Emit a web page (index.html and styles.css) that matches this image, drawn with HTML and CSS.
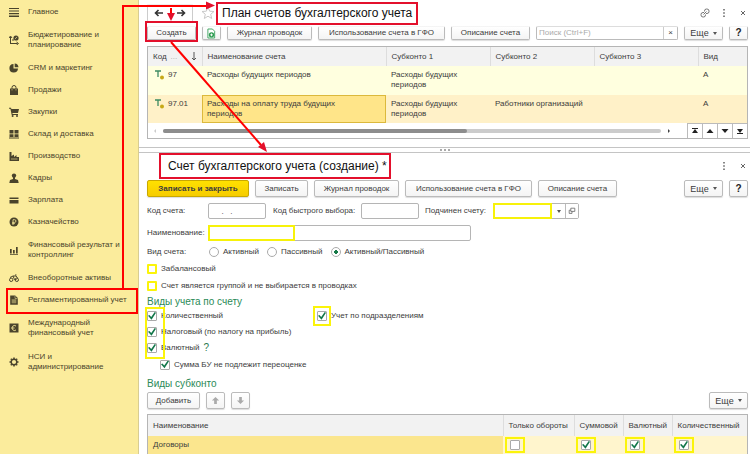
FILE: index.html
```html
<!DOCTYPE html>
<html lang="ru">
<head>
<meta charset="utf-8">
<title>План счетов бухгалтерского учета</title>
<link rel="stylesheet" href="styles.css">
</head>
<body>
<nav class="sidebar">
  <a class="item" href="#"><svg class="icon" viewBox="0 0 10 10"><path d="M0 1h10v1H0zM0 3.4h10v1.2H0zM0 6h10v1.200H0zM0 8.600h10V10H0z"/></svg><span>Главное</span></a>
  <a class="item item-tall" href="#"><svg class="icon" viewBox="0 0 10 10"><path d="M1.500 9V2M0 3l1.500-2L3 3M1.500 8.500h7M7.500 7l2 1.500-2 1.500M4 6V4" fill="none" stroke="#4a442c"/><circle cx="7" cy="3" r="2.600"/><path d="M6 4.200l2-2.400" stroke="#fbec9c" stroke-width=".7"/></svg><span>Бюджетирование и<br>планирование</span></a>
  <a class="item" href="#"><svg class="icon" viewBox="0 0 10 10"><path d="M4.500 1v4.500H9A4.300 4.300 0 1 1 4.500 1z"/><path d="M5.700 .5A4.200 4.200 0 0 1 9.500 4.300H5.700z"/></svg><span>CRM и маркетинг</span></a>
  <a class="item" href="#"><svg class="icon" viewBox="0 0 10 10"><path d="M1 3.500h8V10H1z"/><path d="M3 5V2.500a2 2 0 0 1 4 0V5" fill="none" stroke="#4a442c"/><path d="M3 4v1.500M7 4v1.500" stroke="#fbec9c" stroke-width=".5"/></svg><span>Продажи</span></a>
  <a class="item" href="#"><svg class="icon" viewBox="0 0 10 10"><path d="M0 .7h2l.4 1.200H10L9 6H3.400l.2 1H9v1H2.700L1.400 1.700H0z"/><circle cx="3.600" cy="9" r="1"/><circle cx="8" cy="9" r="1"/></svg><span>Закупки</span></a>
  <a class="item" href="#"><svg class="icon" viewBox="0 0 10 10"><path d="M.5 1h4v3.500h-4zM5.500 1h4v3.500h-4zM.5 5.300h4v2.700h-4zM5.500 5.300h4v2.700h-4zM0 8.500h10v1H0z"/></svg><span>Склад и доставка</span></a>
  <a class="item" href="#"><svg class="icon" viewBox="0 0 10 10"><path d="M.5 10V1h2v4L5 3.500V6l2.500-2v2H10v4z"/><path d="M2 8h6.500" stroke="#fbec9c" stroke-width=".6"/></svg><span>Производство</span></a>
  <a class="item" href="#"><svg class="icon" viewBox="0 0 10 10"><circle cx="5" cy="2.600" r="2.200"/><path d="M4 4h2v2l3 1 .7 3H.3L1 7l3-1z"/></svg><span>Кадры</span></a>
  <a class="item" href="#"><svg class="icon" viewBox="0 0 10 10"><path d="M.5 2.500h9V4h-9zM.5 5h9v3.500h-9z"/></svg><span>Зарплата</span></a>
  <a class="item" href="#"><svg class="icon" viewBox="0 0 10 10"><circle cx="5" cy="5" r="4.500"/><path d="M4 8V2.700h1.600a1.300 1.300 0 0 1 0 2.700H3.200M3.200 6.600h2.700" fill="none" stroke="#fbec9c" stroke-width=".8"/></svg><span>Казначейство</span></a>
  <a class="item item-tall" href="#"><svg class="icon" viewBox="0 0 10 10"><path d="M1 4h1.700v4.500H1zM4 5h1.700v3.500H4zM7 2h1.700v6.500H7zM1 9h8v.8H1z"/></svg><span>Финансовый результат и<br>контроллинг</span></a>
  <a class="item" href="#"><svg class="icon" viewBox="0 0 10 10"><g fill="none" stroke="#4a442c"><circle cx="2.200" cy="6.800" r="1.700"/><circle cx="7.800" cy="6.800" r="1.700"/><path d="M1 4.500l3-1.500h3l1.500 2M4 3l1.500 3.500h2M6 2h1.500"/></g></svg><span>Внеоборотные активы</span></a>
  <a class="item" href="#"><svg class="icon" viewBox="0 0 10 10"><path d="M1.200.5h5L8.800 3v6.800H1.200z"/><path d="M2.500 5h5M2.500 7h5M4 4.500v4M6 4.500v4M6 1v2.500h2.500" stroke="#fbec9c" stroke-width=".5" fill="none"/></svg><span>Регламентированный учет</span></a>
  <a class="item item-tall" href="#"><svg class="icon" viewBox="0 0 10 10"><path d="M.5.5h9v9h-9z"/><path d="M7 3a2.500 2.500 0 1 0 0 4M2.500 5h3" stroke="#fbec9c" stroke-width=".9" fill="none"/></svg><span>Международный<br>финансовый учет</span></a>
  <a class="item item-tall" href="#"><svg class="icon" viewBox="0 0 10 10"><circle cx="5" cy="5" r="2.800" fill="none" stroke="#4a442c" stroke-width="1.400"/><path d="M5 .5v1.500M5 8v1.500M.5 5H2M8 5h1.500M1.800 1.800l1 1M7.200 7.200l1 1M8.200 1.800l-1 1M2.800 7.200l-1 1" stroke="#4a442c" stroke-width="1.500"/></svg><span>НСИ и<br>администрирование</span></a>
</nav>

<main class="main">
  <section class="list-pane">
    <header class="pane-head">
      <div class="history">
        <button type="button" aria-label="Назад"><svg viewBox="0 0 10 8"><path d="M9 4H2M4.500 1L1.500 4l3 3" fill="none" stroke="#333" stroke-width="1.600"/></svg></button>
        <button type="button" aria-label="Вперед"><svg viewBox="0 0 10 8"><path d="M1 4h7M5.500 1l3 3-3 3" fill="none" stroke="#333" stroke-width="1.600"/></svg></button>
      </div>
      <svg class="star" viewBox="0 0 14 14"><path d="M7 1l1.700 4.200 4.300.3-3.300 2.800 1 4.200L7 10.200l-3.700 2.300 1-4.200L1 5.500l4.300-.3z" fill="none" stroke="#c9c9c9"/></svg>
      <h1 class="title">План счетов бухгалтерского учета</h1>
      <div class="window-tools">
        <svg class="tool" viewBox="0 0 10 10"><g fill="none" stroke="#777"><path d="M4.500 3.500V3a2 2 0 0 1 2-2H7a2 2 0 0 1 2 2v.500a2 2 0 0 1-2 2H6"/><path d="M4 4.500H3a2 2 0 0 0-2 2V7a2 2 0 0 0 2 2h.500a2 2 0 0 0 2-2v-.500M3.500 6.500l3-3"/></g></svg>
        <svg class="tool" viewBox="0 0 10 10"><path d="M4.300 1h1.400v1.400H4.300zM4.300 4.300h1.400v1.400H4.300zM4.300 7.600h1.400V9H4.300z" fill="#555"/></svg>
        <svg class="tool" viewBox="0 0 10 10"><path d="M3 3l4 4M7 3L3 7" stroke="#666"/></svg>
      </div>
    </header>
    <div class="toolbar toolbar-cut">
      <button class="btn btn-create" type="button">Создать</button>
      <button class="btn btn-copy" type="button" aria-label="Скопировать"><svg viewBox="0 0 10 12"><path d="M1 1h5l2.500 2.500V11H1z" fill="#fff" stroke="#37a05a"/><circle cx="5" cy="7.500" r="3" fill="#2f9c52"/><path d="M5 6v3M3.500 7.500h3" stroke="#fff"/></svg></button>
      <button class="btn btn-journal" type="button">Журнал проводок</button>
      <button class="btn btn-usage" type="button">Использование счета в ГФО</button>
      <button class="btn btn-about" type="button">Описание счета</button>
      <div class="search">
        <input type="search" placeholder="Поиск (Ctrl+F)" aria-label="Поиск">
        <button type="button" aria-label="Очистить">×</button>
      </div>
      <button class="btn btn-more push" type="button">Еще <i class="caret"></i></button>
      <button class="btn btn-help" type="button">?</button>
    </div>
    <div class="grid-box">
      <table class="accounts">
        <colgroup><col class="c-code"><col><col class="c-sub"><col class="c-sub"><col class="c-sub"><col class="c-kind"></colgroup>
        <thead><tr><th><span class="code-head">Код <span class="dots">...</span><svg viewBox="0 0 6 9"><path d="M3 0v8M1 6l2 2 2-2" fill="none" stroke="#555"/></svg></span></th><th>Наименование счета</th><th>Субконто 1</th><th>Субконто 2</th><th>Субконто 3</th><th>Вид</th></tr></thead>
        <tbody>
          <tr><td><span class="code"><svg viewBox="0 0 10 10"><path d="M0 1h6M3 1v6" stroke="#3d8a62" stroke-width="1.300"/><circle cx="7" cy="7.500" r="2" fill="#c6a917"/></svg>97</span></td><td>Расходы будущих периодов</td><td>Расходы будущих<br>периодов</td><td></td><td></td><td>А</td></tr>
          <tr class="current"><td><span class="code"><svg viewBox="0 0 10 10"><path d="M0 1h6M3 1v6" stroke="#3d8a62" stroke-width="1.300"/><circle cx="7" cy="7.500" r="2" fill="#c6a917"/></svg>97.01</span></td><td class="focus">Расходы на оплату труда будущих<br>периодов</td><td>Расходы будущих<br>периодов</td><td>Работники организаций</td><td></td><td>А</td></tr>
        </tbody>
      </table>
      <div class="scroll-row">
        <i class="arrow arrow-left"></i>
        <div class="track"><div class="thumb"></div></div>
        <i class="arrow arrow-right"></i>
        <div class="pager">
          <button type="button" aria-label="В начало"><svg viewBox="0 0 8 6"><path d="M1 0h6v1H1zM4 1l3 4H1z"/></svg></button>
          <button type="button" aria-label="Вверх"><svg viewBox="0 0 8 6"><path d="M4 1l3.500 4h-7z"/></svg></button>
          <button type="button" aria-label="Вниз"><svg viewBox="0 0 8 6"><path d="M4 5l3.500-4h-7z"/></svg></button>
          <button type="button" aria-label="В конец"><svg viewBox="0 0 8 6"><path d="M1 5h6v1H1zM4 5l3-4H1z"/></svg></button>
        </div>
      </div>
    </div>
  </section>

  <div class="splitter"><i></i><i></i><i></i></div>

  <section class="form-pane">
    <header class="pane-head form-head">
      <h2 class="title">Счет бухгалтерского учета (создание) *</h2>
      <div class="window-tools">
        <svg class="tool" viewBox="0 0 10 10"><path d="M4.300 1h1.400v1.400H4.300zM4.300 4.300h1.400v1.400H4.300zM4.300 7.600h1.400V9H4.300z" fill="#555"/></svg>
        <svg class="tool" viewBox="0 0 10 10"><path d="M3 3l4 4M7 3L3 7" stroke="#666"/></svg>
      </div>
    </header>
    <div class="toolbar form-toolbar">
      <button class="btn btn-primary" type="button">Записать и закрыть</button>
      <button class="btn btn-save" type="button">Записать</button>
      <button class="btn btn-journal" type="button">Журнал проводок</button>
      <button class="btn btn-usage" type="button">Использование счета в ГФО</button>
      <button class="btn btn-about" type="button">Описание счета</button>
      <button class="btn btn-more push" type="button">Еще <i class="caret"></i></button>
      <button class="btn btn-help" type="button">?</button>
    </div>
    <div class="field-row">
      <label class="lead" for="code">Код счета:</label>
      <input class="field" id="code" type="text" value="  .   .">
      <label class="quick" for="quick">Код быстрого выбора:</label>
      <input class="field" id="quick" type="text">
      <label class="parent-label" for="parent">Подчинен счету:</label>
      <span class="combo"><input class="marked" id="parent" type="text"><button type="button" aria-label="Выбрать"><i class="caret"></i></button><button type="button" aria-label="Открыть"><svg viewBox="0 0 10 10"><path d="M3.500 1.500h5v4h-5zM5 5.500v2.500H1.500V4h2" fill="none" stroke="#666"/></svg></button></span>
    </div>
    <div class="field-row">
      <label class="lead" for="name">Наименование:</label>
      <span class="name-field"><input id="name" type="text"></span>
    </div>
    <div class="field-row radio-row">
      <span class="lead">Вид счета:</span>
      <label><input type="radio" name="kind">Активный</label>
      <label><input type="radio" name="kind">Пассивный</label>
      <label><input type="radio" name="kind" checked>Активный/Пассивный</label>
    </div>
    <label class="check plain"><input class="bright" type="checkbox">Забалансовый</label>
    <label class="check plain"><input class="bright" type="checkbox">Счет является группой и не выбирается в проводках</label>
    <h3>Виды учета по счету</h3>
    <div class="kinds">
      <div class="kinds-left">
        <label class="check"><input type="checkbox" checked>Количественный</label>
        <label class="check"><input type="checkbox" checked>Налоговый (по налогу на прибыль)</label>
        <div class="check"><label class="check"><input type="checkbox" checked>Валютный</label><a class="hint" href="#">?</a></div>
      </div>
      <label class="check"><span class="mark"><input type="checkbox" checked></span>Учет по подразделениям</label>
    </div>
    <label class="check nested"><input type="checkbox" checked>Сумма БУ не подлежит переоценке</label>
    <h3 class="second">Виды субконто</h3>
    <div class="toolbar">
      <button class="btn btn-add" type="button">Добавить</button>
      <button class="btn btn-move" type="button" aria-label="Выше"><svg viewBox="0 0 10 10"><path d="M5 1l4 4H6.500v4h-3V5H1z" fill="#aaa"/></svg></button>
      <button class="btn btn-move" type="button" aria-label="Ниже"><svg viewBox="0 0 10 10"><path d="M5 9l4-4H6.500V1h-3v4H1z" fill="#aaa"/></svg></button>
      <button class="btn btn-more push" type="button">Еще <i class="caret"></i></button>
    </div>
    <div class="grid-box subconto-box">
      <table class="subconto">
        <colgroup><col><col class="c-turn"><col class="c-flag"><col class="c-flag"><col class="c-qty"></colgroup>
        <thead><tr><th>Наименование</th><th>Только обороты</th><th>Суммовой</th><th>Валютный</th><th>Количественный</th></tr></thead>
        <tbody><tr><td>Договоры</td>
          <td><span class="mark"><input type="checkbox" aria-label="Только обороты"></span></td>
          <td><span class="mark"><input type="checkbox" aria-label="Суммовой" checked></span></td>
          <td><span class="mark"><input type="checkbox" aria-label="Валютный" checked></span></td>
          <td><span class="mark"><input type="checkbox" aria-label="Количественный" checked></span></td></tr></tbody>
      </table>
    </div>
  </section>
</main>

<svg class="callouts" width="750" height="454" viewBox="0 0 750 454" aria-hidden="true">
  <g fill="none" stroke="#f00" stroke-width="2">
    <rect x="7" y="289" width="130" height="24"/>
    <path d="M123 289V6H207"/>
    <path d="M171 8v6"/>
    <path d="M171 42L261 145"/>
  </g>
  <rect x="146" y="22" width="51" height="19" fill="none" stroke="#e3102c" stroke-width="2"/>
  <path d="M215 5.500l-9-4v8zM171 21l-4-8h8zM267 152l-9-5 6-5z" fill="#e3102c"/>
</svg>
</body>
</html>
```
FILE: styles.css
```css
* { box-sizing: border-box; }

body {
  position: relative;
  display: flex;
  min-height: 100vh;
  max-height: 100vh;
  margin: 0;
  overflow: hidden;
  background: #fff;
  color: #3c3c3c;
  font: 8px/10px "Liberation Sans", Arial, sans-serif;
}

button, input { margin: 0; padding: 0; font: inherit; color: inherit; }
button { display: flex; align-items: center; justify-content: center; }
h1, h2, h3 { margin: 0; font-weight: 400; }

/* Sections panel */
.sidebar {
  flex: none;
  width: 139px;
  padding-top: 1px;
  background: #fbec9c;
  border-right: 1px solid #d8cd92;
}
.item {
  display: flex;
  align-items: center;
  gap: 9px;
  height: 22px;
  padding-left: 9px;
  color: #4a442c;
  text-decoration: none;
  white-space: nowrap;
}
.item-tall { height: 34px; }
.icon { flex: none; width: 10px; height: 10px; fill: #4a442c; }

.main { flex: 1; min-width: 0; }
.list-pane, .form-pane { padding: 0 2px 0 8px; }

.pane-head { display: flex; align-items: center; height: 26px; }
.title {
  padding: 0 4px;
  border: 2px solid #e3102c;
  color: #111;
  font-size: 12px;
  line-height: 19px;
  white-space: nowrap;
}
.form-head { padding-left: 12px; }
.form-head .title { padding: 0 2px 0 7px; line-height: 22px; }
.history {
  display: flex;
  width: 46px;
  height: 18px;
  border: 1px solid #ccc;
  border-top-color: #eee;
  border-radius: 2px;
}
.history button { flex: 1; border: 0; background: none; }
.history svg { width: 10px; height: 8px; }
.star { width: 14px; height: 14px; margin: 0 1px 0 8px; }
.window-tools { display: flex; gap: 9px; margin-left: auto; }
.tool { width: 10px; height: 10px; }

/* Command bars */
.toolbar { display: flex; gap: 6px; height: 17px; }
.btn {
  flex: none;
  border: 1px solid #bbb;
  border-radius: 2px;
  background: linear-gradient(#fff, #f4f4f4);
  box-shadow: 0 1px 1px #ddd;
  white-space: nowrap;
}
.toolbar-cut { height: 14px; }
.toolbar-cut .btn { border-top-color: transparent; }
.btn-create { width: 49px; }
.btn-copy { width: 19px; }
.btn-copy svg { width: 9px; height: 11px; }
.btn-journal { width: 85px; }
.btn-usage { width: 127px; }
.btn-about { width: 79px; }
.btn-save { width: 53px; }
.btn-add { width: 53px; }
.btn-move { width: 19px; }
.btn-move svg { width: 9px; height: 9px; }
.btn-more { width: 39px; gap: 4px; font-size: 9px; }
.btn-help { width: 19px; color: #222; font-size: 10px; font-weight: 700; }
.btn-primary {
  width: 102px;
  border-color: #c9a800;
  background: linear-gradient(#ffe100, #f6cc00);
  font-weight: 700;
}
.push { margin-left: auto; }
.caret {
  width: 0;
  border: 2px solid transparent;
  border-top: 3px solid #555;
  border-bottom: 0;
}
.search {
  display: flex;
  width: 143px;
  border: 1px solid #bbb;
  border-top-color: #ddd;
  border-radius: 2px;
}
.search input { flex: 1; min-width: 0; padding-left: 2px; border: 0; background: none; }
.search input::placeholder { color: #aaa; }
.search button { width: 14px; border: 0; border-left: 1px solid #ccc; background: none; }

/* Tables */
.grid-box { margin-top: 6px; border: 1px solid #b5b5b5; }
table { width: 100%; border-collapse: collapse; table-layout: fixed; }
th, td { padding: 0 0 0 5px; text-align: left; font-weight: 400; white-space: nowrap; }
th { height: 19px; background: #f2f2f2; border-right: 1px solid #ddd; }
th:first-child { padding-right: 5px; }
th:last-child { border-right: 0; }
.c-code { width: 54px; }
.c-sub { width: 104px; }
.c-kind { width: 49px; }
.accounts td { padding-top: 4px; vertical-align: top; background: #ffffdf; }
.accounts tbody tr { height: 29px; }
.accounts tbody .current { height: 28px; }
.accounts .current td { background: #fff1c8; }
.accounts .current .focus { background: #ffe589; box-shadow: inset 0 0 0 1px #dcb93c; }
.code-head { display: flex; align-items: center; }
.code-head .dots { color: #aaa; margin-left: 4px; }
.code-head svg { width: 6px; height: 9px; margin-left: auto; }
.code { display: flex; gap: 3px; margin-left: 2px; }
.code svg { width: 10px; height: 10px; }

.scroll-row { display: flex; align-items: center; height: 15px; padding-left: 6px; }
.arrow { width: 0; border: 2px solid transparent; }
.arrow-left { border-right-color: #ccc; border-left: 0; }
.arrow-right { border-left-color: #444; border-right: 0; margin-right: 17px; }
.track { flex: 1; height: 4px; margin: 0 7px; border-radius: 2px; background: #ccc; }
.thumb { width: 61%; height: 4px; border-radius: 2px; background: #8d8d8d; }
.pager { display: flex; align-self: stretch; }
.pager button { width: 15px; border: 0; border-top: 1px solid #bbb; border-left: 1px solid #bbb; background: #fff; }
.pager svg { width: 8px; height: 6px; fill: #222; }

.splitter {
  display: flex;
  gap: 2px;
  align-items: center;
  justify-content: center;
  height: 6px;
  margin-top: 8px;
  border: solid #c4c4c4;
  border-width: 1px 0;
}
.splitter i { width: 2px; height: 2px; background: #aaa; }

/* Account form */
.form-toolbar { margin-top: 1px; }
.field-row { display: flex; align-items: center; height: 16px; margin-top: 6px; white-space: nowrap; }
.lead { flex: none; width: 61px; }
.field { width: 58px; height: 16px; padding: 0 8px; border: 1px solid #b5b5b5; border-radius: 2px; white-space: pre; }
.quick { width: 95px; padding-left: 7px; }
.parent-label { width: 74px; padding-left: 6px; }
.combo { display: flex; height: 16px; border: 1px solid #b5b5b5; border-radius: 2px; }
.combo input { width: 59px; margin: -1px 0 -1px -1px; }
.combo button { width: 13px; border: 0; border-left: 1px solid #bbb; background: #fff; }
.combo input + button { border-left: 0; }
.combo svg { width: 8px; height: 8px; }
.marked, .name-field input { border: 2px solid #f7f20a; background: #fff; }
.name-field { display: flex; width: 263px; height: 16px; border: 1px solid #b5b5b5; border-radius: 2px; }
.name-field input { width: 87px; margin: -1px; }
.radio-row { margin-top: 3px; gap: 8px; }
.radio-row .lead { width: 54px; }
.radio-row label { display: flex; align-items: center; gap: 4px; }

input[type="radio"], input[type="checkbox"] {
  flex: none;
  width: 10px;
  height: 10px;
  appearance: none;
  border: 1px solid #aaa;
  background: #fff;
}
input[type="radio"] { border-radius: 50%; }
input[type="radio"]:checked { background: radial-gradient(circle, #167a48 2px, #fff 2px); }
input[type="checkbox"] { border-radius: 1px; }
input[type="checkbox"]:checked::before {
  content: "";
  display: block;
  width: 8px;
  height: 8px;
  background: #12774a;
  clip-path: polygon(0 48%, 18% 36%, 40% 64%, 84% 0, 100% 8%, 44% 96%);
}
input.bright { border: 2px solid #fbf40a; }

.check { display: flex; align-items: center; gap: 4px; height: 17px; white-space: nowrap; }
h3 { height: 14px; color: #2b8a57; font-size: 10px; line-height: 16px; }
.kinds { display: flex; align-items: flex-start; height: 48px; }
.kinds-left { position: relative; width: 166px; }
.kinds-left .check { height: 16px; }
.kinds-left::before {
  content: "";
  position: absolute;
  inset: -1px auto -3px -2px;
  width: 16px;
  border: 2px solid #fbf40a;
}
.kinds > .check { height: 16px; gap: 0; }
.kinds .mark { padding: 3px 2px; }
.hint { color: #2b7a50; font-size: 10px; text-decoration: none; }
.nested { margin-left: 13px; }
.second { height: 19px; line-height: 22px; }
.mark { display: inline-flex; padding: 2px 3px; border: 2px solid #fbf40a; }

.subconto-box { margin-top: 5px; }
.subconto th { height: 21px; }
.subconto td { height: 18px; padding: 0 2px; background: #fff5cd; }
.subconto td:first-child { padding-left: 5px; background: #fbe68e; }
.subconto .mark { padding: 1px 3px; vertical-align: middle; }
.c-turn { width: 71px; }
.c-flag { width: 49px; }
.c-qty { width: 75px; }

.callouts { position: absolute; top: 0; left: 0; pointer-events: none; }
```
